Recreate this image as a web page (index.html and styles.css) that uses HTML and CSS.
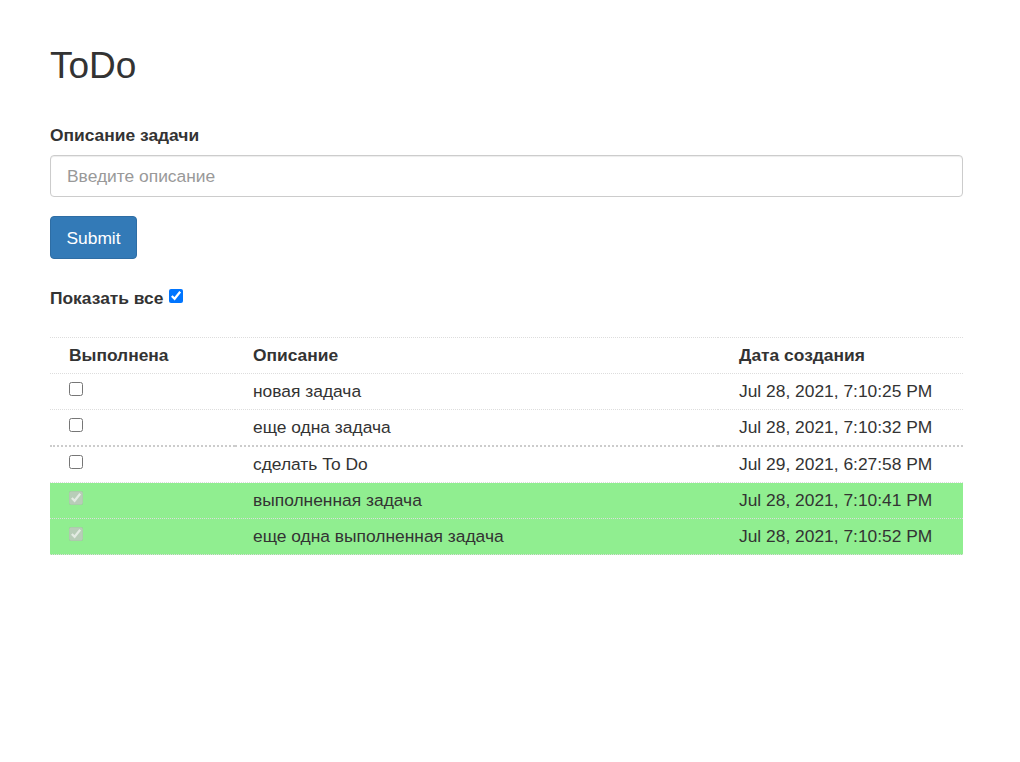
FILE: index.html
```html
<!DOCTYPE html>
<html lang="ru">
<head>
<meta charset="utf-8">
<title>ToDo</title>
<link rel="stylesheet" href="styles.css">
</head>
<body>
<div class="container">
  <h1 class="title">ToDo</h1>
  <form class="task-form">
    <label class="field-label" for="desc">Описание задачи</label>
    <input id="desc" class="field-input" type="text" placeholder="Введите описание">
    <button type="button" class="btn-submit">Submit</button>
  </form>
  <div class="show-all">
    <span class="show-all-label">Показать все</span>
    <input class="show-all-box" type="checkbox" checked>
  </div>
  <table class="todo-table">
    <colgroup>
      <col class="col-done">
      <col class="col-desc">
      <col class="col-date">
    </colgroup>
    <thead>
      <tr>
        <th class="c1">Выполнена</th>
        <th class="c2">Описание</th>
        <th class="c3">Дата создания</th>
      </tr>
    </thead>
    <tbody>
      <tr>
        <td class="c1"><input class="row-box" type="checkbox"></td>
        <td class="c2">новая задача</td>
        <td class="c3">Jul 28, 2021, 7:10:25 PM</td>
      </tr>
      <tr>
        <td class="c1"><input class="row-box" type="checkbox"></td>
        <td class="c2">еще одна задача</td>
        <td class="c3">Jul 28, 2021, 7:10:32 PM</td>
      </tr>
    </tbody>
    <tbody class="group">
      <tr>
        <td class="c1"><input class="row-box" type="checkbox"></td>
        <td class="c2">сделать To Do</td>
        <td class="c3">Jul 29, 2021, 6:27:58 PM</td>
      </tr>
      <tr class="done">
        <td class="c1"><input class="row-box" type="checkbox" checked disabled></td>
        <td class="c2">выполненная задача</td>
        <td class="c3">Jul 28, 2021, 7:10:41 PM</td>
      </tr>
      <tr class="done last">
        <td class="c1"><input class="row-box" type="checkbox" checked disabled></td>
        <td class="c2">еще одна выполненная задача</td>
        <td class="c3">Jul 28, 2021, 7:10:52 PM</td>
      </tr>
    </tbody>
  </table>
</div>
</body>
</html>
```

FILE: styles.css
```css
* {
  box-sizing: border-box;
}

html, body {
  margin: 0;
  padding: 0;
  background: #fff;
}

body {
  font-family: "Liberation Sans", Arial, Helvetica, sans-serif;
  font-size: 17.4px;
  color: #333;
}

.container {
  width: 913px;
  margin-left: 50px;
}

.title {
  margin: 46px 0 0 0;
  font-size: 37px;
  line-height: 40px;
  font-weight: 400;
  color: #333;
}

.task-form {
  display: flex;
  flex-direction: column;
  align-items: flex-start;
}

.field-label {
  display: block;
  margin-top: 39px;
  font-weight: 700;
  line-height: 20px;
}

.field-input {
  display: block;
  margin-top: 10px;
  width: 913px;
  height: 42px;
  padding: 0 16px;
  border: 1px solid #ccc;
  border-radius: 4px;
  font-family: inherit;
  font-size: 17.4px;
  color: #555;
  box-shadow: inset 0 1px 1px rgba(0, 0, 0, 0.075);
  outline: none;
}

.field-input::placeholder {
  color: #999;
}

.btn-submit {
  margin-top: 19px;
  width: 87px;
  height: 43px;
  padding: 0;
  background: #337ab7;
  border: 1px solid #2e6da4;
  border-radius: 4px;
  color: #fff;
  font-family: inherit;
  font-size: 17.4px;
  line-height: 20px;
}

.show-all {
  margin-top: 29px;
  height: 20px;
  line-height: 20px;
  display: flex;
  align-items: center;
}

.show-all-label {
  font-weight: 700;
}

.show-all-box {
  width: 14px;
  height: 14px;
  margin: 0 0 4px 6px;
}

.todo-table {
  margin-top: 29px;
  width: 913px;
  border-collapse: collapse;
  table-layout: fixed;
}

.col-done { width: 185px; }
.col-desc { width: 483px; }
.col-date { width: 245px; }

.todo-table th,
.todo-table td {
  padding: 8px 8px 8px 0;
  line-height: 19px;
  border-top: 1px dotted #ddd;
  text-align: left;
  vertical-align: top;
}

.todo-table th {
  font-weight: 700;
}

.todo-table .c1 { padding-left: 19px; }
.todo-table .c2 { padding-left: 18px; }
.todo-table .c3 { padding-left: 21px; }

.todo-table tbody.group tr:first-child td {
  border-top: 2px dotted #ccc;
}

.todo-table tr.done td {
  background: #90ee90;
}

.todo-table tr.last td {
  border-bottom: 1px dotted #ddd;
}

.row-box {
  width: 14px;
  height: 14px;
  margin: 0;
  vertical-align: top;
}
```
